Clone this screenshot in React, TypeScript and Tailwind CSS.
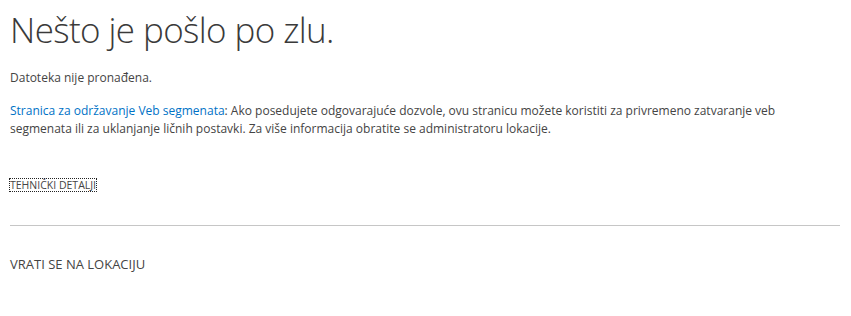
export default function App() {
  return (
    <div className="w-[851px] h-[316px] bg-white overflow-hidden" style={{ fontFamily: '"Open Sans", "Noto Sans", sans-serif' }}>
      <div className="px-[10px] pt-[6px] w-[850px]">
        <h1 className="text-[35px] leading-[48px] font-light text-[#3a3a3a] tracking-[-0.6px]">Nešto je pošlo po zlu.</h1>
        <div className="mt-[15px] text-[12px] leading-[18px] text-[#444444]">Datoteka nije pronađena.</div>
        <div className="mt-[15px] text-[12px] leading-[18px] text-[#444444] w-[830px]">
          <span className="text-[#0072c6]">Stranica za održavanje Veb segmenata</span>: Ako posedujete odgovarajuće dozvole, ovu stranicu možete koristiti za privremeno zatvaranje veb segmenata ili za uklanjanje ličnih postavki. Za više informacija obratite se administratoru lokacije.
        </div>
        <div className="mt-[41px] flex">
          <span className="text-[10.5px] leading-[12px] text-[#444444] uppercase outline-1 outline-dotted outline-[#222]">TEHNIČKI DETALJI</span>
        </div>
        <div className="mt-[34px] w-[830px] border-t border-[#c6c6c6]"></div>
        <div className="mt-[29px] text-[13px] leading-[18px] text-[#444444]">VRATI SE NA LOKACIJU</div>
      </div>
    </div>
  );
}
